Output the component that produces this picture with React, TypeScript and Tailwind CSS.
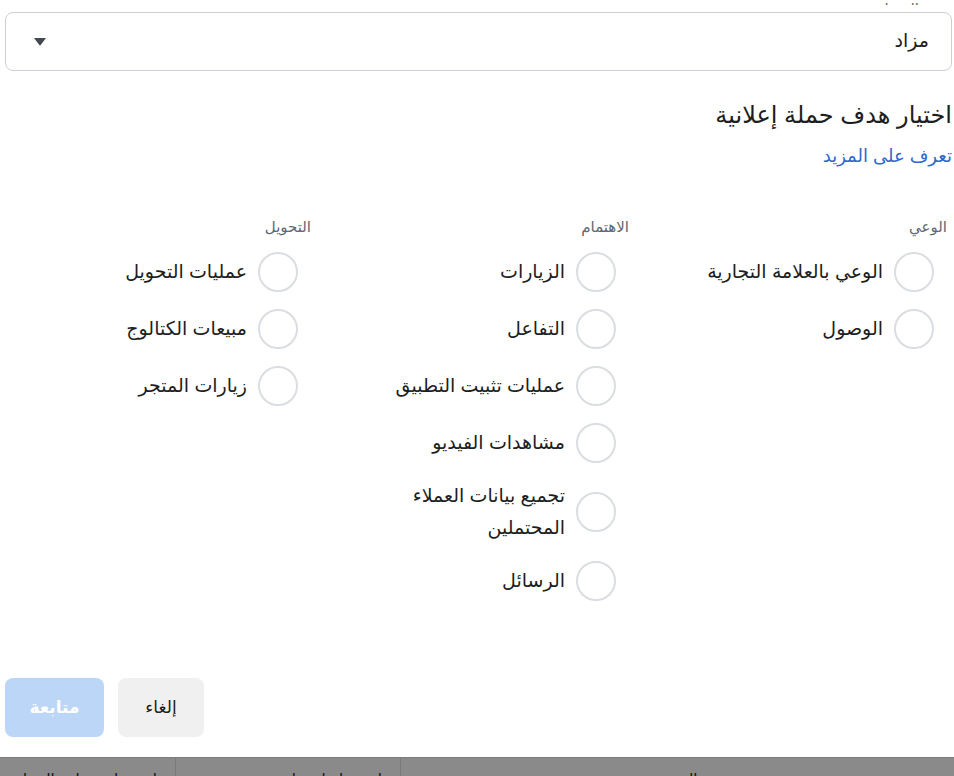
import { useState } from "react";

type Goal = { id: string; label: string[] };

const columns: { title: string; goals: Goal[] }[] = [
  {
    title: "الوعي",
    goals: [
      { id: "brand", label: ["الوعي بالعلامة التجارية"] },
      { id: "reach", label: ["الوصول"] },
    ],
  },
  {
    title: "الاهتمام",
    goals: [
      { id: "traffic", label: ["الزيارات"] },
      { id: "engagement", label: ["التفاعل"] },
      { id: "installs", label: ["عمليات تثبيت التطبيق"] },
      { id: "video", label: ["مشاهدات الفيديو"] },
      { id: "leads", label: ["تجميع بيانات العملاء", "المحتملين"] },
      { id: "messages", label: ["الرسائل"] },
    ],
  },
  {
    title: "التحويل",
    goals: [
      { id: "conversions", label: ["عمليات التحويل"] },
      { id: "catalog", label: ["مبيعات الكتالوج"] },
      { id: "store", label: ["زيارات المتجر"] },
    ],
  },
];

export default function App() {
  const [selected, setSelected] = useState<string | null>(null);

  return (
    <div
      dir="rtl"
      className="w-[954px] h-[776px] bg-white overflow-hidden flex flex-col text-[#1c1e21]"
      style={{ fontFamily: '"Liberation Sans", "DejaVu Sans", sans-serif' }}
    >
      {/* label cut off above the fold */}
      <div className="h-[12px]">
        <div className="h-[5px] overflow-hidden pr-[10px] flex items-end">
          <span className="text-[15px] leading-[18px] translate-y-[13px] text-[#606770]">نوع الشراء</span>
        </div>
      </div>

      <button className="ml-[5px] mr-[2px] h-[59px] border border-[#ccd0d5] rounded-[8px] flex items-center justify-between pr-[22px] pl-[27px]">
        <span className="text-[19px]">مزاد</span>
        <svg width="14" height="9" viewBox="0 0 14 9">
          <path d="M1 1 H13 L7.5 8.2 Q7 8.8 6.5 8.2 Z" fill="#444950" />
        </svg>
      </button>

      <div className="pr-[2px] mt-[29px]">
        <h2 className="text-[24px] leading-[30px]">اختيار هدف حملة إعلانية</h2>
        <a href="#" className="block mt-[15px] text-[18px] leading-[22px] text-[#2d68cc]">
          تعرف على المزيد
        </a>
      </div>

      <div className="grid grid-cols-3 mt-[51px]">
        {columns.map((col) => (
          <div key={col.title}>
            <div className="pr-[7px] text-[15px] leading-[18px] text-[#606770]">{col.title}</div>
            <div className="pr-[20px] mt-[16px] flex flex-col gap-[17px]">
              {col.goals.map((g) => (
                <label key={g.id} className="flex items-center gap-[11px] cursor-pointer">
                  <span
                    onClick={() => setSelected(g.id)}
                    className={`w-[40px] h-[40px] shrink-0 rounded-full border-2 ${
                      selected === g.id ? "border-[#1877f2] border-[8px]" : "border-[#dadde1]"
                    }`}
                  />
                  <span className="text-[19px] leading-[32px]">
                    {g.label.map((l, i) => (
                      <span key={i} className="block">
                        {l}
                      </span>
                    ))}
                  </span>
                </label>
              ))}
            </div>
          </div>
        ))}
      </div>

      <div className="flex-1" />

      <div className="flex justify-end gap-[14px] pl-[5px] mb-[20px]">
        <button className="w-[86px] h-[59px] rounded-[8px] bg-[#f0f0f0] text-[17px] text-[#1c1e21]">إلغاء</button>
        <button className="w-[99px] h-[59px] rounded-[8px] bg-[#bcd6f7] text-[17px] font-bold text-white">متابعة</button>
      </div>

      {/* table header behind the modal, dimmed */}
      <div className="h-[19px] bg-[#8a8a8b] flex border-t border-[#7c7c7d] overflow-hidden text-[15px] text-[#111]">
        <div className="flex-1 border-l border-[#7a7a7b] flex justify-center">
          <span className="translate-y-[10px]">التقييم</span>
        </div>
        <div className="w-[225px] border-l border-[#7a7a7b] pr-[18px]">
          <span className="inline-block translate-y-[10px]">استخدام استراتيجية</span>
        </div>
        <div className="w-[175px] pr-[18px]">
          <span className="inline-block translate-y-[10px]">استخدام ميزانية الحملة</span>
        </div>
      </div>
    </div>
  );
}
